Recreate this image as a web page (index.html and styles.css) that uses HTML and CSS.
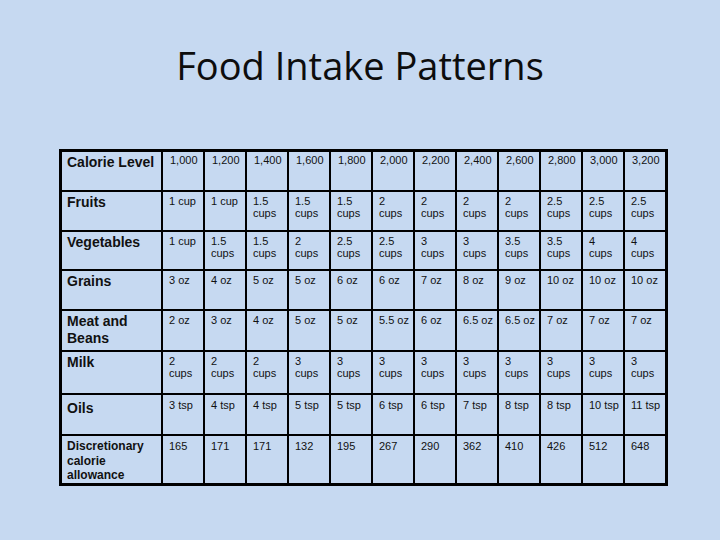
FILE: index.html
```html
<!DOCTYPE html>
<html lang="en">
<head>
<meta charset="utf-8">
<title>Food Intake Patterns</title>
<link rel="stylesheet" href="styles.css">
</head>
<body>
<div class="slide">
  <h1 class="title">Food Intake Patterns</h1>
  <table class="intake">
    <tbody>
      <tr class="head">
        <th>Calorie Level</th>
        <td>1,000</td><td>1,200</td><td>1,400</td><td>1,600</td><td>1,800</td><td>2,000</td><td>2,200</td><td>2,400</td><td>2,600</td><td>2,800</td><td>3,000</td><td>3,200</td>
      </tr>
      <tr>
        <th>Fruits</th>
        <td>1 cup</td><td>1 cup</td><td>1.5 cups</td><td>1.5 cups</td><td>1.5 cups</td><td>2 cups</td><td>2 cups</td><td>2 cups</td><td>2 cups</td><td>2.5 cups</td><td>2.5 cups</td><td>2.5 cups</td>
      </tr>
      <tr>
        <th>Vegetables</th>
        <td>1 cup</td><td>1.5 cups</td><td>1.5 cups</td><td>2 cups</td><td>2.5 cups</td><td>2.5 cups</td><td>3 cups</td><td>3 cups</td><td>3.5 cups</td><td>3.5 cups</td><td>4 cups</td><td>4 cups</td>
      </tr>
      <tr>
        <th>Grains</th>
        <td>3 oz</td><td>4 oz</td><td>5 oz</td><td>5 oz</td><td>6 oz</td><td>6 oz</td><td>7 oz</td><td>8 oz</td><td>9 oz</td><td>10 oz</td><td>10 oz</td><td>10 oz</td>
      </tr>
      <tr>
        <th>Meat and Beans</th>
        <td>2 oz</td><td>3 oz</td><td>4 oz</td><td>5 oz</td><td>5 oz</td><td>5.5 oz</td><td>6 oz</td><td>6.5 oz</td><td>6.5 oz</td><td>7 oz</td><td>7 oz</td><td>7 oz</td>
      </tr>
      <tr>
        <th>Milk</th>
        <td>2 cups</td><td>2 cups</td><td>2 cups</td><td>3 cups</td><td>3 cups</td><td>3 cups</td><td>3 cups</td><td>3 cups</td><td>3 cups</td><td>3 cups</td><td>3 cups</td><td>3 cups</td>
      </tr>
      <tr class="oils">
        <th>Oils</th>
        <td>3 tsp</td><td>4 tsp</td><td>4 tsp</td><td>5 tsp</td><td>5 tsp</td><td>6 tsp</td><td>6 tsp</td><td>7 tsp</td><td>8 tsp</td><td>8 tsp</td><td>10 tsp</td><td>11 tsp</td>
      </tr>
      <tr class="disc">
        <th>Discretionary calorie allowance</th>
        <td>165</td><td>171</td><td>171</td><td>132</td><td>195</td><td>267</td><td>290</td><td>362</td><td>410</td><td>426</td><td>512</td><td>648</td>
      </tr>
    </tbody>
  </table>
</div>
</body>
</html>
```

FILE: styles.css
```css
html, body {
  margin: 0;
  padding: 0;
}

body {
  background: #c6d9f1;
  width: 720px;
  height: 540px;
  overflow: hidden;
}

.slide {
  display: flex;
  flex-direction: column;
  align-items: flex-start;
}

.title {
  align-self: stretch;
  margin: 39px 0 0 0;
  font-family: "Open Sans", "Noto Sans", sans-serif;
  font-weight: 400;
  font-size: 38px;
  line-height: 52px;
  text-align: center;
  color: #0d0d0d;
}

.intake {
  margin: 58px 0 0 59px;
  border: 3px solid #000;
  border-collapse: separate;
  border-spacing: 0;
  font-family: "Liberation Sans", Arial, sans-serif;
  color: #111;
}

.intake th,
.intake td {
  box-sizing: border-box;
  border-right: 2px solid #000;
  border-bottom: 2px solid #000;
  vertical-align: top;
  text-align: left;
}

.intake tr > :last-child {
  border-right: 0;
}

.intake tr:last-child > * {
  border-bottom: 0;
}

.intake th {
  width: 101px;
  padding: 2px 4px 0 5px;
  font-size: 14px;
  font-weight: 700;
  line-height: 16.5px;
}

.intake td {
  width: 42px;
  padding: 3px 3px 0 6px;
  font-size: 11px;
  line-height: 12px;
  font-weight: 400;
}

.intake td:last-child {
  width: 40px;
}

.intake .head td {
  padding-top: 2px;
  padding-left: 7px;
}

.intake .oils th {
  padding-top: 5px;
}

.intake .oils td {
  padding-top: 4px;
}

.intake .disc th {
  font-size: 12px;
  line-height: 14.5px;
  padding-top: 3px;
}

.intake .disc td {
  padding-top: 4px;
}

.intake tr:nth-child(1) > * { height: 40px; }
.intake tr:nth-child(2) > * { height: 40px; }
.intake tr:nth-child(3) > * { height: 39px; }
.intake tr:nth-child(4) > * { height: 40px; }
.intake tr:nth-child(5) > * { height: 41px; }
.intake tr:nth-child(6) > * { height: 43px; }
.intake tr:nth-child(7) > * { height: 41px; }
.intake tr:nth-child(8) > * { height: 47px; }
```
